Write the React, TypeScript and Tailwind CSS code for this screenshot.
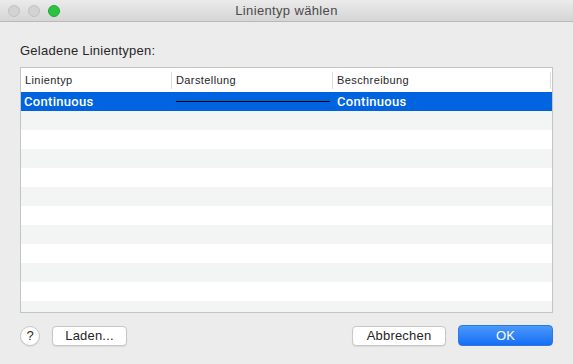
import React from "react";

const rows = Array.from({ length: 12 }, (_, i) => i);

export default function App() {
  return (
    <div
      className="w-[573px] h-[364px] bg-[#ececec] flex flex-col overflow-hidden"
      style={{ fontFamily: '"Liberation Sans", Arial, sans-serif' }}
    >
      {/* Title bar */}
      <div className="relative h-[22px] shrink-0 bg-gradient-to-b from-[#ebebeb] to-[#d5d5d5] border-b border-[#b9b9b9] flex items-center justify-center">
        <div className="absolute left-[8px] top-[5px] flex gap-[8px]">
          <div className="w-[12px] h-[12px] rounded-full bg-[#d4d2d3] border border-[#c3c1c2]" />
          <div className="w-[12px] h-[12px] rounded-full bg-[#d4d2d3] border border-[#c3c1c2]" />
          <div className="w-[12px] h-[12px] rounded-full bg-[#2ac441] border border-[#22a834]" />
        </div>
        <span className="text-[13px] tracking-[0.35px] text-[#4a4a4a] leading-none">Linientyp wählen</span>
      </div>

      {/* Content */}
      <div className="flex flex-col px-[20px] pt-[21px]">
        <div className="text-[13px] tracking-[0.25px] leading-[16px] text-[#262626]">Geladene Linientypen:</div>
        <div className="mt-[8px] h-[246px] border border-[#c4c4c4] bg-white overflow-hidden flex flex-col">
          {/* Header */}
          <div className="h-[24px] shrink-0 flex items-center text-[11px] tracking-[0.4px] text-[#262626] bg-white">
            <div className="w-[151px] pl-[4px] border-r border-[#dcdcdc] h-[17px] flex items-center">Linientyp</div>
            <div className="w-[161px] pl-[4px] border-r border-[#dcdcdc] h-[17px] flex items-center">Darstellung</div>
            <div className="flex-1 pl-[4px] border-r border-[#dcdcdc] h-[17px] flex items-center">Beschreibung</div>
            <div className="w-[1px]" />
          </div>
          {rows.map((i) => {
            if (i === 0) {
              return (
                <div
                  key={i}
                  className="h-[19px] shrink-0 flex items-center bg-[#0064e1] text-white text-[13px] font-medium tracking-[0.3px]"
                  style={{ fontFamily: 'Roboto, "Liberation Sans", sans-serif' }}
                >
                  <div className="w-[151px] pl-[3px]">Continuous</div>
                  <div className="w-[161px] pl-[4px] pr-[3px] flex items-center">
                    <div className="h-[1px] w-[154px] bg-black" />
                  </div>
                  <div className="flex-1 pl-[4px]">Continuous</div>
                </div>
              );
            }
            return (
              <div
                key={i}
                className={`h-[19px] shrink-0 ${i % 2 === 1 ? "bg-[#f3f4f4]" : "bg-white"}`}
              />
            );
          })}
        </div>

        {/* Buttons */}
        <div className="mt-[12px] flex items-center">
          <div className="w-[20px] h-[20px] rounded-full bg-white border border-[#c6c6c6] shadow-[0_1px_1px_rgba(0,0,0,0.08)] flex items-center justify-center text-[13px] text-[#262626]">
            ?
          </div>
          <button className="ml-[12px] w-[75px] h-[20px] rounded-[4px] bg-white border border-[#c6c6c6] shadow-[0_1px_1px_rgba(0,0,0,0.08)] text-[13px] tracking-[0.2px] text-[#262626] leading-none">
            Laden...
          </button>
          <div className="flex-1" />
          <button className="w-[94px] h-[20px] rounded-[4px] bg-white border border-[#c6c6c6] shadow-[0_1px_1px_rgba(0,0,0,0.08)] text-[13px] tracking-[0.2px] text-[#262626] leading-none">
            Abbrechen
          </button>
          <button className="ml-[12px] w-[95px] h-[21px] rounded-[4px] bg-gradient-to-b from-[#4a98f9] to-[#136ef6] border border-[#2a78ea] text-[13px] text-white leading-none">
            OK
          </button>
        </div>
      </div>
    </div>
  );
}
